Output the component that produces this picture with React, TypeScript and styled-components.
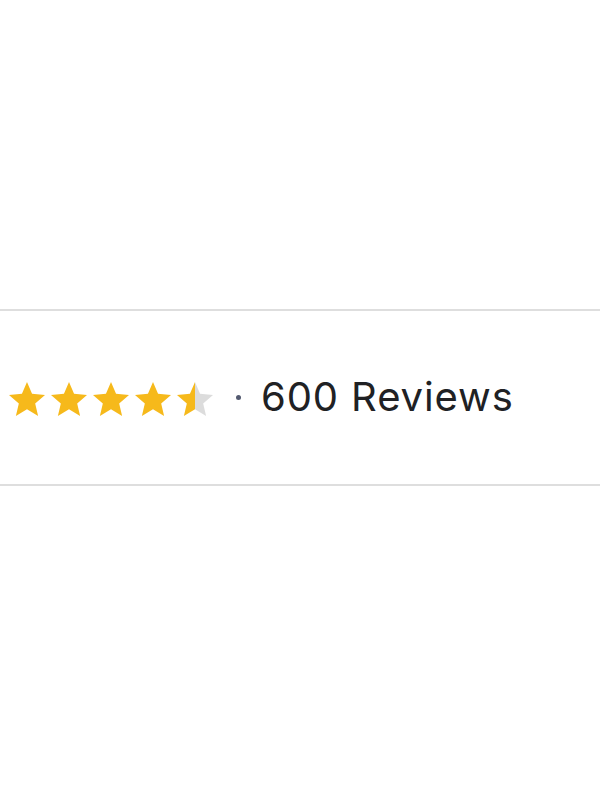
import React from "react";
import styled, { createGlobalStyle } from "styled-components";

const Global = createGlobalStyle`
  html, body { margin: 0; padding: 0; background: #ffffff; }
  body { font-family: Inter, "Liberation Sans", sans-serif; }
`;

const Page = styled.div`
  width: 600px;
  height: 800px;
  padding-top: 309px;
  box-sizing: border-box;
`;

const RatingBar = styled.section`
  border-top: 2px solid #dedede;
  border-bottom: 2px solid #dedede;
  height: 177px;
  box-sizing: border-box;
  display: flex;
  align-items: center;
  padding-left: 9px;
`;

const Stars = styled.div`
  display: flex;
  gap: 6px;
  margin-top: 2px;
`;

const Dot = styled.span`
  width: 5px;
  height: 5px;
  border-radius: 50%;
  background: #535a70;
  margin-left: 23px;
  margin-right: 20px;
`;

const Count = styled.span`
  font-family: Inter, "Liberation Sans", sans-serif;
  font-size: 40px;
  color: #202124;
  letter-spacing: 0.9px;
  margin-bottom: 2px;
`;

const STAR = "M12 17.27L18.18 21l-1.64-7.03L22 9.24l-7.19-.61L12 2 9.19 8.63 2 9.24l5.46 4.73L5.82 21z";

const Star = ({ fill, id }: { fill: number; id: string }) => (
  <svg width="36" height="34" viewBox="2 2 20 19" preserveAspectRatio="none">
    <defs>
      <linearGradient id={id} x1="0" x2="1" y1="0" y2="0">
        <stop offset={`${fill * 100}%`} stopColor="#f6b91b" />
        <stop offset={`${fill * 100}%`} stopColor="#dcdcdc" />
      </linearGradient>
    </defs>
    <path d={STAR} fill={`url(#${id})`} />
  </svg>
);

export default function App() {
  const fills = [1, 1, 1, 1, 0.5];
  return (
    <Page>
      <Global />
      <RatingBar>
        <Stars>
          {fills.map((f, i) => (
            <Star key={i} fill={f} id={`s${i}`} />
          ))}
        </Stars>
        <Dot />
        <Count>600 Reviews</Count>
      </RatingBar>
    </Page>
  );
}
